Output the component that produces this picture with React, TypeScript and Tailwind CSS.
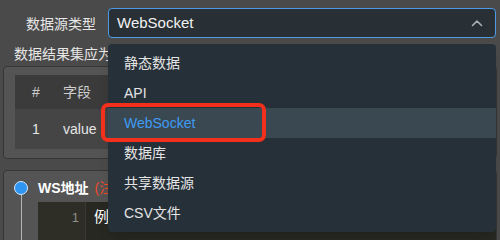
import React from "react";

const options = ["静态数据", "API", "WebSocket", "数据库", "共享数据源", "CSV文件"];

export default function App() {
  const selected = "WebSocket";
  return (
    <div
      className="relative w-[500px] h-[240px] overflow-hidden bg-[#4a4a4a] text-[#e6e6e6]"
      style={{ fontFamily: '"Liberation Sans", "Noto Sans CJK SC", sans-serif' }}
    >
      {/* data source type row */}
      <div className="flex items-center pt-2">
        <div className="w-[108px] pr-3 pt-[2px] text-right text-[14px]">数据源类型</div>
        <div className="mr-1 flex h-[30px] flex-1 items-center justify-between rounded-[4px] border border-[#4d9be6] bg-[#283035] pl-2 pr-3">
          <span className="text-[15px] text-[#f2f2f2]">WebSocket</span>
          <svg width="12" height="8" viewBox="0 0 12 8" fill="none">
            <path d="M1.5 6.5L6 2L10.5 6.5" stroke="#a9b0b5" strokeWidth="1.6" strokeLinecap="round" strokeLinejoin="round" />
          </svg>
        </div>
      </div>

      <div className="mt-[7px] pl-[14px] text-[14px] leading-[18px] whitespace-nowrap">数据结果集应为一个数组</div>

      {/* result set panel */}
      <div className="mx-[3px] mt-[3px] h-[93px] rounded-[4px] border border-[#363636] bg-[#545454] px-[11px] pt-[8px]">
        <div className="bg-[#454545] text-[14px]">
          <div className="flex h-[34px] items-center bg-[#3b3b3b] text-[#cfcfcf]">
            <div className="w-[42px] text-center">#</div>
            <div className="ml-[6px]">字段</div>
          </div>
          <div className="flex h-[40px] items-center">
            <div className="w-[42px] text-center">1</div>
            <div className="ml-[6px]">value</div>
          </div>
        </div>
      </div>

      {/* ws address panel */}
      <div className="mx-[3px] mt-[11px] h-[80px] rounded-[4px] border border-[#363636] bg-[#545454]">
        <div className="flex h-full">
          <div className="flex w-[34px] flex-col items-center pt-[10px]">
            <div className="h-[14px] w-[14px] shrink-0 rounded-full border-[1.5px] border-[#d6e8fb] bg-[#2f95f2]" />
            <div className="w-px flex-1 bg-[#b5b5b5]" />
          </div>
          <div className="flex flex-1 flex-col">
            <div className="flex h-[31px] items-center pt-[3px] text-[14px]">
              <span className="font-bold text-white">WS地址</span>
              <span className="ml-[6px] text-[#f04a2c]">(注：</span>
            </div>
            <div className="flex flex-1 bg-[#282822]">
              <div className="w-[48px] border-r border-[#3a3a33] bg-[#2e2e27] pr-[6px] pt-[6px] text-right text-[13px] text-[#8f8f88]">1</div>
              <div className="relative flex-1 pl-[8px] pt-[4px] text-[15px] text-white">
                例如
                <div className="absolute right-[2px] bottom-0 h-[7px] w-[11px] bg-[#8a8a8a]" />
              </div>
            </div>
          </div>
        </div>
      </div>

      {/* dropdown menu */}
      <div className="absolute left-[108px] top-[44px] w-[388px] rounded-[4px] bg-[#263038] py-[4px] shadow-lg">
        {options.map((o) => (
          <div
            key={o}
            className={
              o === selected
                ? "flex h-[30px] items-center bg-[#3a4852] pl-[16px] text-[14px] text-[#3f9cf2]"
                : "flex h-[30px] items-center pl-[16px] text-[14px] text-[#e4e4e4]"
            }
          >
            {o}
          </div>
        ))}
      </div>

      {/* annotation */}
      <div className="absolute left-[101px] top-[103px] h-[39px] w-[165px] rounded-[7px] border-[4px] border-[#f2301c]" />
    </div>
  );
}
